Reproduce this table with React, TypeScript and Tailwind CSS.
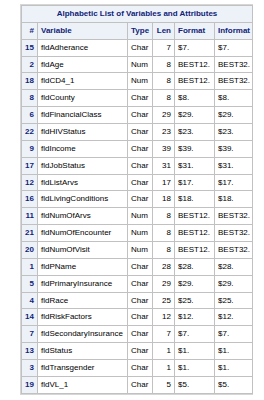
const rows: [number, string, string, number, string, string][] = [
  [15, "fldAdherance", "Char", 7, "$7.", "$7."],
  [2, "fldAge", "Num", 8, "BEST12.", "BEST32."],
  [18, "fldCD4_1", "Num", 8, "BEST12.", "BEST32."],
  [8, "fldCounty", "Char", 8, "$8.", "$8."],
  [6, "fldFinancialClass", "Char", 29, "$29.", "$29."],
  [22, "fldHIVStatus", "Char", 23, "$23.", "$23."],
  [9, "fldIncome", "Char", 39, "$39.", "$39."],
  [17, "fldJobStatus", "Char", 31, "$31.", "$31."],
  [12, "fldListArvs", "Char", 17, "$17.", "$17."],
  [16, "fldLivingConditions", "Char", 18, "$18.", "$18."],
  [11, "fldNumOfArvs", "Num", 8, "BEST12.", "BEST32."],
  [21, "fldNumOfEncounter", "Num", 8, "BEST12.", "BEST32."],
  [20, "fldNumOfVisit", "Num", 8, "BEST12.", "BEST32."],
  [1, "fldPName", "Char", 28, "$28.", "$28."],
  [5, "fldPrimaryInsurance", "Char", 29, "$29.", "$29."],
  [4, "fldRace", "Char", 25, "$25.", "$25."],
  [14, "fldRiskFactors", "Char", 12, "$12.", "$12."],
  [7, "fldSecondaryInsurance", "Char", 7, "$7.", "$7."],
  [13, "fldStatus", "Char", 1, "$1.", "$1."],
  [3, "fldTransgender", "Char", 1, "$1.", "$1."],
  [19, "fldVL_1", "Char", 5, "$5.", "$5."],
];

const head = "h-[16.87px] border border-[#c1c1c1] bg-[#edf2f9] px-[3px] font-bold text-[#112277] whitespace-nowrap overflow-hidden";
const cell = "h-[16.87px] border border-[#c1c1c1] bg-white px-[3px] text-black whitespace-nowrap overflow-hidden";

export default function App() {
  return (
    <div className="min-h-screen bg-white pt-[4px] pl-[20px]" style={{ fontFamily: '"Liberation Sans", Arial, sans-serif' }}>
      <div className="w-[233px] border border-[#d6d6d6]">
        <table className="w-[231px] table-fixed border-collapse text-[8px] leading-[10px]">
          <colgroup>
            <col className="w-[16px]" />
            <col className="w-[90px]" />
            <col className="w-[25px]" />
            <col className="w-[22px]" />
            <col className="w-[40px]" />
            <col className="w-[38px]" />
          </colgroup>
          <thead>
            <tr>
              <th colSpan={6} className={head + " text-center"}>Alphabetic List of Variables and Attributes</th>
            </tr>
            <tr>
              <th className={head + " text-right"}>#</th>
              <th className={head + " text-left"}>Variable</th>
              <th className={head + " text-left"}>Type</th>
              <th className={head + " text-right"}>Len</th>
              <th className={head + " text-left"}>Format</th>
              <th className={head + " text-left"}>Informat</th>
            </tr>
          </thead>
          <tbody>
            {rows.map((r) => (
              <tr key={r[0]}>
                <th className={head + " text-right"}>{r[0]}</th>
                <td className={cell}>{r[1]}</td>
                <td className={cell}>{r[2]}</td>
                <td className={cell + " text-right"}>{r[3]}</td>
                <td className={cell}>{r[4]}</td>
                <td className={cell}>{r[5]}</td>
              </tr>
            ))}
          </tbody>
        </table>
      </div>
    </div>
  );
}
